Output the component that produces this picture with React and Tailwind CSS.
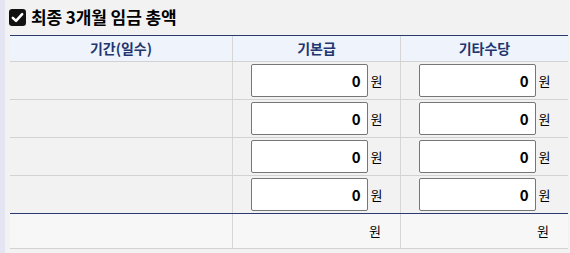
import React from "react";

const font = { fontFamily: '"Noto Sans CJK KR", "Noto Sans", sans-serif' };

function CheckIcon() {
  return (
    <svg width="17" height="17" viewBox="0 0 16 16">
      <rect x="0" y="0" width="16" height="16" rx="3" fill="#111" />
      <path d="M3.6 8.4 L6.6 11.2 L12.4 4.8" stroke="#fff" strokeWidth="2.4" fill="none" strokeLinecap="round" strokeLinejoin="round" />
    </svg>
  );
}

function MoneyCell() {
  return (
    <div className="flex items-center justify-center gap-[3px] border-l border-[#d6d6d6]">
      <input
        readOnly
        value="0"
        className="w-[117px] h-[33px] border border-[#767676] rounded-[2px] bg-white text-right pr-[6px] text-[15px] font-bold text-black outline-none"
        style={font}
      />
      <span className="text-[13px] text-black">원</span>
    </div>
  );
}

export default function App() {
  const rows = [0, 1, 2, 3];
  return (
    <div className="flex min-h-[253px] w-[570px] bg-[#f2f2f2]" style={font}>
      <div className="w-[5px] shrink-0 bg-[#e3e6f2]" />
      <div className="pl-[5px]">
        {/* 제목 */}
        <div className="h-[35px] flex items-center gap-[5px] -ml-[1px] pb-[1px]">
          <CheckIcon />
          <span className="text-[17px] font-bold text-black tracking-[-0.1px]">최종 3개월 임금 총액</span>
        </div>

        {/* 표 */}
        <div className="w-[558px] border-t border-[#2b3a6e]">
          <div className="grid grid-cols-[222px_168px_168px] h-[26px] bg-[#eff3fb] border-b border-[#d2d2d2] text-[14px] font-bold text-[#22366f]">
            <div className="flex items-center justify-center">기간(일수)</div>
            <div className="flex items-center justify-center border-l border-[#d6d6d6]">기본급</div>
            <div className="flex items-center justify-center border-l border-[#d6d6d6]">기타수당</div>
          </div>

          {rows.map((r) => (
            <div
              key={r}
              className={
                "grid grid-cols-[222px_168px_168px] h-[38px] border-b " +
                (r === 3 ? "border-[#2b3a6e]" : "border-[#d2d2d2]")
              }
            >
              <div />
              <MoneyCell />
              <MoneyCell />
            </div>
          ))}

          <div className="grid grid-cols-[222px_168px_168px] h-[35px] bg-[#f7f7f7] border-b border-[#d2d2d2] text-[13px] text-black">
            <div />
            <div className="flex items-center justify-end pr-[19px] border-l border-[#d6d6d6]">원</div>
            <div className="flex items-center justify-end pr-[19px] border-l border-[#d6d6d6]">원</div>
          </div>
        </div>
      </div>
    </div>
  );
}
